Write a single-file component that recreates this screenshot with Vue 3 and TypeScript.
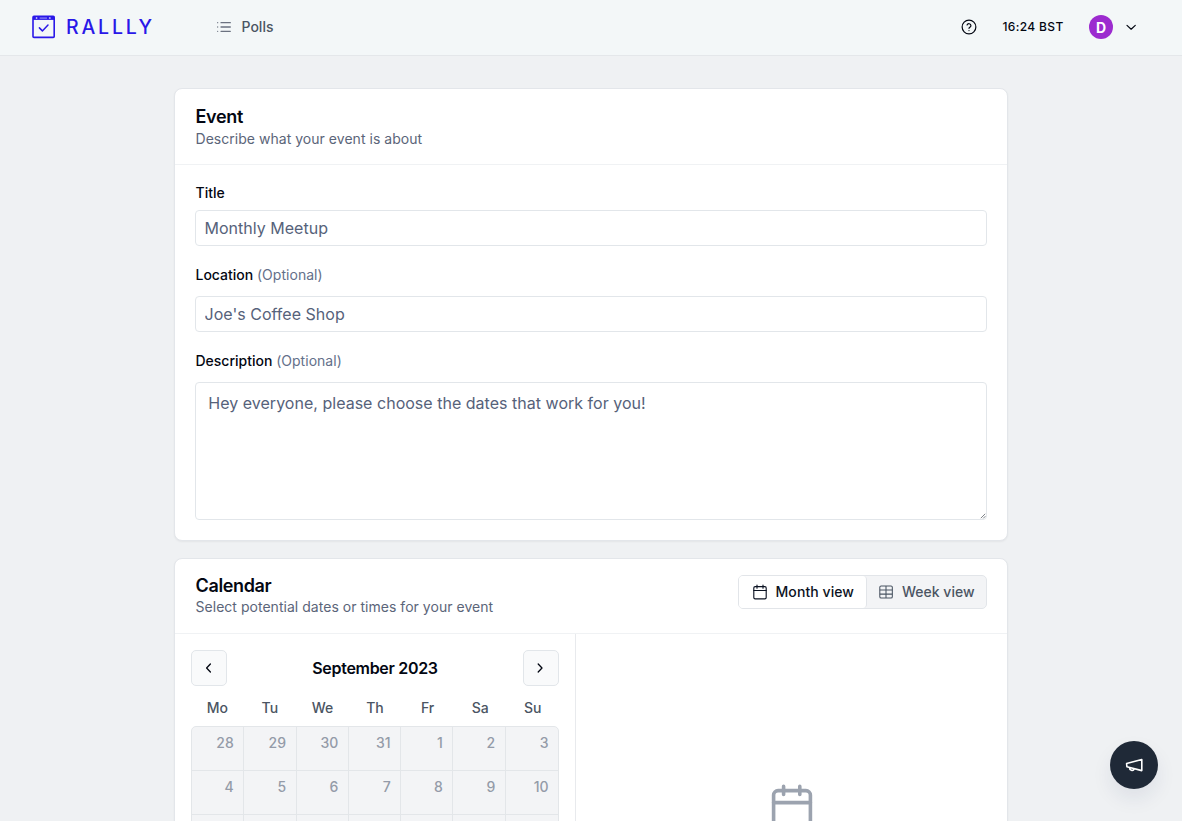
<script setup lang="ts">
import { ref } from 'vue'

const title = ref('')
const location = ref('')
const description = ref('')
const weekdays: string[] = ['Mo', 'Tu', 'We', 'Th', 'Fr', 'Sa', 'Su']
const days: number[] = [28, 29, 30, 31, ...Array.from({ length: 17 }, (_, i) => i + 1)]
</script>

<template>
  <div class="page">
    <header class="topbar">
      <a class="brand">
        <svg class="logo" width="24" height="24" viewBox="0 0 24 24" fill="none" stroke="currentColor">
          <rect x="1" y="1.4" width="21.2" height="21" rx="1" stroke-width="1.6" />
          <path d="M1 3h21.2" stroke-width="3.8" />
          <path d="M3.8 3.1h1.2M7.6 3.1h7.4M17.6 3.1h1.2" stroke="#6f66f0" stroke-width="1.6" />
          <path d="M4.6 3h.1M17.6 3h.1" stroke="#d5d3fb" stroke-width="1.6" stroke-linecap="round" />
          <path d="M7.4 12.9l3 3 5.6-5.8" stroke-width="1.5" stroke-linecap="round" stroke-linejoin="round" />
        </svg>
        <span class="wordmark">RALLLY</span>
      </a>
      <a class="nav-link">
        <svg width="16" height="16" viewBox="0 0 24 24" fill="none" stroke="currentColor" stroke-width="1.9" stroke-linecap="round">
          <path d="M7.5 5.5h14M7.5 12h14M7.5 18.5h14M2.5 5.5h.01M2.5 12h.01M2.5 18.5h.01" />
        </svg>
        <span>Polls</span>
      </a>
      <div class="account">
        <svg class="help" width="16" height="16" viewBox="0 0 24 24" fill="none" stroke="currentColor" stroke-width="1.8" stroke-linecap="round" stroke-linejoin="round">
          <circle cx="12" cy="12" r="10.3" />
          <path d="M9.1 9a3 3 0 0 1 5.8 1c0 2-2.9 2.5-2.9 4M12 17.4h.01" />
        </svg>
        <span class="clock">16:24 BST</span>
        <span class="avatar">D</span>
        <svg class="chevron" width="16" height="16" viewBox="0 0 24 24" fill="none" stroke="currentColor" stroke-width="1.8" stroke-linecap="round" stroke-linejoin="round">
          <path d="M6 9.5l6.2 5.8 6.2-5.8" />
        </svg>
      </div>
    </header>

    <main class="content">
      <section class="card event">
        <div class="card-head">
          <div class="heading">
            <h2>Event</h2>
            <p>Describe what your event is about</p>
          </div>
        </div>
        <form class="fields">
          <label for="title">Title</label>
          <input id="title" v-model="title" placeholder="Monthly Meetup" />
          <label for="location">Location <span>(Optional)</span></label>
          <input id="location" v-model="location" placeholder="Joe's Coffee Shop" />
          <label for="description">Description <span>(Optional)</span></label>
          <div class="area">
            <textarea id="description" v-model="description" placeholder="Hey everyone, please choose the dates that work for you!"></textarea>
            <svg class="grip" width="6" height="6" viewBox="0 0 6 6" fill="none" stroke="#70757c" stroke-width="0.9"><path d="M.8 5.2l4.4-4.4M3.2 5.4l2.2-2.2" /></svg>
          </div>
        </form>
      </section>

      <section class="card calendar">
        <div class="card-head">
          <div class="heading">
            <h2>Calendar</h2>
            <p>Select potential dates or times for your event</p>
          </div>
          <div class="tabs">
            <button class="tab active" type="button">
              <svg width="16" height="16" viewBox="0 0 24 24" fill="none" stroke="currentColor" stroke-width="1.7" stroke-linecap="round" stroke-linejoin="round">
                <rect x="2.7" y="4" width="18.6" height="18.3" rx="2" />
                <path d="M2.7 9.7h18.6M7.5 1.7v4.5M16.5 1.7v4.5" />
              </svg>
              <span>Month view</span>
            </button>
            <button class="tab" type="button">
              <svg width="16" height="16" viewBox="0 0 24 24" fill="none" stroke="currentColor" stroke-width="1.6" stroke-linejoin="round">
                <rect x="2.7" y="3" width="18.8" height="18" rx="2" />
                <path d="M2.7 9h18.8M2.7 15.2h18.8M12 3v18" />
              </svg>
              <span>Week view</span>
            </button>
          </div>
        </div>
        <div class="calendar-body">
          <div class="month">
            <div class="month-nav">
              <button type="button" aria-label="Previous month">
                <svg width="16" height="16" viewBox="0 0 16 16" fill="none" stroke="currentColor" stroke-width="1.3" stroke-linecap="round" stroke-linejoin="round"><path d="M9.4 4L5.6 8l3.8 4" /></svg>
              </button>
              <strong>September 2023</strong>
              <button type="button" aria-label="Next month">
                <svg width="16" height="16" viewBox="0 0 16 16" fill="none" stroke="currentColor" stroke-width="1.3" stroke-linecap="round" stroke-linejoin="round"><path d="M5.2 4L9 8l-3.8 4" /></svg>
              </button>
            </div>
            <div class="weekdays">
              <span v-for="d in weekdays" :key="d">{{ d }}</span>
            </div>
            <div class="days">
              <div v-for="(d, i) in days" :key="i" class="day">{{ d }}</div>
            </div>
          </div>
          <div class="selection">
            <svg width="48" height="48" viewBox="0 0 48 48" fill="none" stroke="currentColor" stroke-width="3.6" stroke-linecap="round" stroke-linejoin="round">
              <rect x="5.6" y="7.6" width="36.8" height="36" rx="4.5" />
              <path d="M5.6 19.6h36.8M15.6 3.4v8M31.8 3.4v8" />
            </svg>
          </div>
        </div>
      </section>
    </main>

    <button class="feedback" type="button" aria-label="Feedback">
      <svg width="20" height="20" viewBox="0 0 20 20" fill="none" stroke="currentColor" stroke-width="1.6" stroke-linecap="round" stroke-linejoin="round">
        <path d="M2.6 8.6L17.8 4.6v11L2.9 11.8zM5.4 12.6c0 2.9 3.8 4 4.8 1.3" />
      </svg>
    </button>
  </div>
</template>

<style>
html,
body {
  margin: 0;
  overflow: hidden;
}
</style>

<style scoped>
* {
  box-sizing: border-box;
}
.page {
  height: 821px;
  overflow: hidden;
  background: #eff1f3;
  color: #030712;
  font-family: Inter, "Liberation Sans", sans-serif;
  font-size: 14px;
}
svg {
  display: block;
  flex: none;
}
button,
input,
textarea {
  font: inherit;
  color: inherit;
}
.topbar {
  height: 56px;
  display: flex;
  align-items: center;
  padding: 0 43px 1px 31.5px;
  background: #f3f7f8;
  border-bottom: 1px solid #e4e7ea;
}
.brand {
  display: flex;
  align-items: center;
  width: 184px;
  color: #2a18e8;
}
.wordmark {
  margin-left: 10.5px;
  font-size: 19.5px;
  font-weight: 500;
  letter-spacing: 2.8px;
  line-height: 24px;
}
.nav-link {
  display: flex;
  align-items: center;
  gap: 10px;
  color: #4b5563;
  font-weight: 450;
}
.nav-link span {
  line-height: 16px;
}
.nav-link svg {
  color: #6b7280;
}
.account {
  display: flex;
  align-items: center;
  margin-left: auto;
}
.clock {
  margin-left: 25.5px;
  width: 61.5px;
  font-size: 12px;
  font-weight: 450;
  letter-spacing: 0.36px;
  line-height: 16px;
  white-space: nowrap;
}
.avatar {
  display: grid;
  place-items: center;
  width: 24px;
  height: 24px;
  margin: 0 10px 0 25px;
  border-radius: 50%;
  background: #9c2bcf;
  color: #fff;
  font-weight: 700;
}
.content {
  width: 834px;
  margin: 0 auto;
  padding-top: 32px;
}
.card {
  border: 1px solid #e3e6ea;
  border-radius: 8px;
  background: #fff;
  box-shadow: 0 1px 2px rgb(0 0 0 / 5%);
  overflow: hidden;
}
.event {
  height: 453px;
  margin-bottom: 17px;
}
.calendar {
  height: 480px;
}
.card-head {
  height: 76px;
  display: flex;
  align-items: flex-start;
  justify-content: space-between;
  padding: 17px 20px 0;
  border-bottom: 1px solid #f0f2f4;
}
.calendar .card-head {
  height: 75px;
  padding-top: 16px;
}
.heading {
  padding-left: 0.5px;
}
h2 {
  margin: 0;
  font-size: 18px;
  font-weight: 600;
  line-height: 22px;
  letter-spacing: -0.35px;
}
p {
  margin: 0;
  color: #5b6579;
  line-height: 22px;
  letter-spacing: 0.03px;
}
.calendar p {
  margin-top: -1px;
}
.fields {
  padding: 18px 20px 0;
}
label {
  display: block;
  height: 20px;
  margin-bottom: 7px;
  padding-left: 0.5px;
  line-height: 20px;
  font-weight: 450;
  letter-spacing: 0;
}
label:not(:first-child) {
  height: 24px;
}
label span {
  font-weight: 400;
  letter-spacing: 0.03px;
  color: #64708a;
}
input,
textarea {
  display: block;
  width: 100%;
  border: 1px solid #e2e6ea;
  border-radius: 4px;
  background: #fff;
  font-size: 16px;
  letter-spacing: 0.02px;
  outline: none;
}
input {
  height: 36px;
  margin-bottom: 19px;
  padding: 0 8.5px;
}
.area {
  position: relative;
}
textarea {
  height: 138px;
  padding: 8px 12.3px;
  line-height: 24px;
  resize: none;
}
.grip {
  position: absolute;
  right: 1px;
  bottom: 1px;
}
input::placeholder,
textarea::placeholder {
  color: #56627a;
  opacity: 1;
}
.tabs {
  display: flex;
  width: 249px;
  height: 34px;
  border: 1px solid #e2e5e9;
  border-radius: 5px;
  background: #f3f4f6;
}
.tab {
  display: flex;
  flex: 1;
  align-items: center;
  gap: 8px;
  padding: 0 0 1px 11px;
  border: 0;
  background: none;
  color: #4b5563;
  font-weight: 450;
  letter-spacing: 0;
  white-space: nowrap;
}
.tab.active {
  flex: 0 0 128px;
  padding-left: 12.5px;
  border-right: 1px solid #e2e5e9;
  border-radius: 4px;
  background: #fff;
  color: #0b1222;
  letter-spacing: 0.08px;
}
.calendar-body {
  display: flex;
  height: 400px;
}
.month {
  width: 401px;
  padding: 16px;
  border-right: 1px solid #e8eaed;
}
.month-nav {
  display: flex;
  align-items: center;
  justify-content: space-between;
}
.month-nav button {
  display: grid;
  place-items: center;
  width: 36px;
  height: 36px;
  padding: 0;
  border: 1px solid #e2e6ea;
  border-radius: 5px;
  background: #f9fafb;
}
.month-nav strong {
  font-size: 16px;
  font-weight: 600;
  letter-spacing: -0.3px;
}
.weekdays {
  display: grid;
  grid-template-columns: repeat(7, 1fr);
  height: 40px;
  line-height: 44px;
  text-align: center;
  color: #4b5563;
  font-weight: 450;
}
.days {
  display: grid;
  grid-template-columns: repeat(7, 1fr);
  border: 1px solid #e3e6e9;
  border-radius: 5px;
  background: #f3f4f6;
}
.day {
  height: 44px;
  padding: 11px 9.5px 0 0;
  border-right: 1px solid #e3e6e9;
  border-bottom: 1px solid #e3e6e9;
  line-height: 10px;
  text-align: right;
  color: #949ba8;
  font-weight: 500;
}
.day:nth-child(7n) {
  border-right: 0;
}
.day:nth-child(n + 15) {
  padding-top: 15px;
}
.selection {
  flex: 1;
  display: flex;
  justify-content: center;
  padding-top: 149px;
  color: #9ca3af;
}
.feedback {
  position: fixed;
  right: 24px;
  bottom: 32px;
  display: grid;
  place-items: center;
  width: 48px;
  height: 48px;
  padding: 0;
  border: 0;
  border-radius: 50%;
  background: #1f2937;
  color: #fff;
  box-shadow: 0 10px 20px rgb(30 41 90 / 8%);
}
</style>
